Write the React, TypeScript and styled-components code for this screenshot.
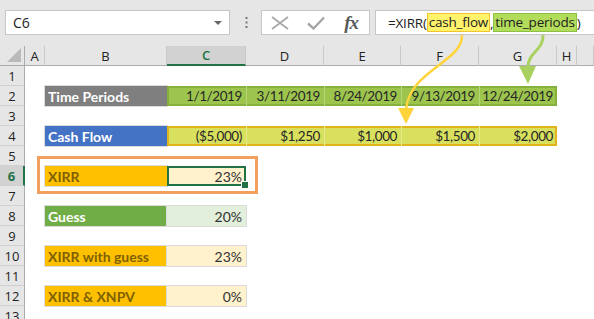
import styled, { createGlobalStyle } from "styled-components";

/**
 * Types
 */
type RangeTone = "green" | "yellow";

/**
 * Styled
 */
const GlobalStyle = createGlobalStyle`
  body {
    margin: 0;
    background: #fff;
  }
`;

const COLS = "25px 20px 122px 79px 78px 77px 78px 78px 20px 1fr";

const Page = styled.div`
  position: relative;
  width: 594px;
  height: 319px;
  overflow: hidden;
  background: #fff;
  font-family: "Open Sans", "Noto Sans", sans-serif;
`;

const FormulaBar = styled.div`
  display: flex;
  align-items: flex-start;
  box-sizing: border-box;
  height: 46px;
  padding: 10px 0 0 5px;
  background: #e6e6e6;
`;

const NameBox = styled.div`
  position: relative;
  box-sizing: border-box;
  display: flex;
  align-items: center;
  width: 225px;
  height: 25px;
  padding-left: 7px;
  background: #fff;
  border: 1px solid #c6c6c6;
  font-size: 14px;
  color: #222;
`;

const Caret = styled.span`
  position: absolute;
  right: 7px;
  top: 10px;
  border-left: 4px solid transparent;
  border-right: 4px solid transparent;
  border-top: 4px solid #666;
`;

const Dots = styled.div`
  display: flex;
  align-items: center;
  justify-content: center;
  width: 31px;
  height: 25px;
  padding-left: 2px;
  box-sizing: border-box;
`;

const ButtonBox = styled.div`
  display: flex;
  box-sizing: border-box;
  width: 109px;
  height: 25px;
  background: #fff;
  border: 1px solid #c6c6c6;
`;

const BarButton = styled.div`
  display: flex;
  align-items: center;
  justify-content: center;
  width: 36px;
  height: 23px;
`;

const Fx = styled.span`
  font-family: "Liberation Serif", serif;
  font-style: italic;
  font-weight: bold;
  font-size: 19px;
  color: #5a5a5a;
  letter-spacing: -1px;
`;

const FormulaBox = styled.div`
  display: flex;
  align-items: center;
  box-sizing: border-box;
  flex: 1;
  height: 25px;
  margin-left: 5px;
  padding-left: 12px;
  background: #fff;
  border: 1px solid #c6c6c6;
  border-right: none;
  font-size: 13.5px;
  letter-spacing: -0.2px;
  color: #222;
  white-space: nowrap;
`;

const RefToken = styled.span<{ $tone: RangeTone }>`
  padding: 0 1px;
  line-height: 17px;
  background: ${(p) => (p.$tone === "yellow" ? "#fff36b" : "#b3dc5a")};
  border: 1px solid ${(p) => (p.$tone === "yellow" ? "#f4c430" : "#8cc043")};
`;

const SheetRow = styled.div`
  display: grid;
  grid-template-columns: ${COLS};
  height: 20px;
`;

const Corner = styled.div`
  position: relative;
  background: #e6e6e6;
  border-right: 1px solid #ababab;
  border-bottom: 1px solid #ababab;

  &::after {
    content: "";
    position: absolute;
    right: 3px;
    bottom: 3px;
    width: 14px;
    height: 14px;
    background: #b9b9b9;
    clip-path: polygon(100% 0, 100% 100%, 0 100%);
  }
`;

const ColHead = styled.div<{ $active?: boolean }>`
  display: flex;
  align-items: center;
  justify-content: center;
  box-sizing: border-box;
  background: ${(p) => (p.$active ? "#d2d2d2" : "#e6e6e6")};
  border-right: 1px solid #c9c9c9;
  border-bottom: ${(p) => (p.$active ? "2px solid #217346" : "1px solid #ababab")};
  font-size: 13px;
  color: ${(p) => (p.$active ? "#217346" : "#222")};
  font-weight: ${(p) => (p.$active ? 600 : 400)};
`;

const RowHead = styled.div<{ $active?: boolean }>`
  display: flex;
  align-items: center;
  justify-content: center;
  box-sizing: border-box;
  background: ${(p) => (p.$active ? "#d2d2d2" : "#e6e6e6")};
  border-right: ${(p) => (p.$active ? "2px solid #217346" : "1px solid #ababab")};
  border-bottom: 1px solid #d0d0d0;
  font-size: 13px;
  color: ${(p) => (p.$active ? "#217346" : "#222")};
  font-weight: ${(p) => (p.$active ? 700 : 400)};
`;

const Label = styled.div<{ $bg: string; $color: string }>`
  grid-column: 3;
  display: flex;
  align-items: center;
  box-sizing: border-box;
  padding-left: 3px;
  background: ${(p) => p.$bg};
  box-shadow: 0 0 0 1px #dcdcdc;
  font-family: "Lato", sans-serif;
  font-weight: 700;
  font-size: 14px;
  color: ${(p) => p.$color};
  white-space: nowrap;
`;

const Value = styled.div<{ $bg: string; $selected?: boolean }>`
  position: relative;
  grid-column: 4;
  display: flex;
  align-items: center;
  justify-content: flex-end;
  box-sizing: border-box;
  padding-right: 4px;
  background: ${(p) => p.$bg};
  box-shadow: ${(p) => (p.$selected ? "inset 0 0 0 2px #217346" : "0 0 0 1px #dcdcdc")};
  font-family: "Lato", sans-serif;
  font-size: 14px;
  color: #333;
`;

const FillHandle = styled.span`
  position: absolute;
  right: -3px;
  bottom: -3px;
  width: 6px;
  height: 6px;
  background: #217346;
  border: 1px solid #fff;
`;

const Range = styled.div<{ $tone: RangeTone }>`
  grid-column: 4 / span 5;
  display: grid;
  grid-template-columns: 79px 78px 77px 78px 78px;
  box-sizing: border-box;
  background: ${(p) => (p.$tone === "yellow" ? "#d9e05d" : "#9dc54e")};
  box-shadow: inset 0 0 0 2px ${(p) => (p.$tone === "yellow" ? "#e2b41b" : "#86b03d")};
`;

const RangeCell = styled.div<{ $tone: RangeTone }>`
  display: flex;
  align-items: center;
  justify-content: flex-end;
  padding-right: 4px;
  border-left: 1px solid ${(p) => (p.$tone === "yellow" ? "#e6ea8f" : "#b6d67e")};
  font-family: "Lato", sans-serif;
  font-size: 13.5px;
  letter-spacing: -0.4px;
  color: #262626;
  white-space: nowrap;

  &:first-child {
    border-left: none;
  }
`;

const Callout = styled.div`
  position: absolute;
  left: 37px;
  top: 156px;
  width: 221px;
  height: 38px;
  box-sizing: border-box;
  border: 3px solid #f1a060;
  pointer-events: none;
`;

const Arrows = styled.svg`
  position: absolute;
  left: 0;
  top: 0;
  pointer-events: none;
`;

/**
 * Data
 */
const columns = ["A", "B", "C", "D", "E", "F", "G", "H", ""];
const dates = ["1/1/2019", "3/11/2019", "8/24/2019", "9/13/2019", "12/24/2019"];
const flows = ["($5,000)", "$1,250", "$1,000", "$1,500", "$2,000"];

const results = [
  { row: 6, label: "XIRR", bg: "#ffc000", color: "#7f6000", valueBg: "#fff2cc", value: "23%", selected: true },
  { row: 8, label: "Guess", bg: "#70ad47", color: "#fff", valueBg: "#e2efda", value: "20%" },
  { row: 10, label: "XIRR with guess", bg: "#ffc000", color: "#7f6000", valueBg: "#fff2cc", value: "23%" },
  { row: 12, label: "XIRR & XNPV", bg: "#ffc000", color: "#7f6000", valueBg: "#fff2cc", value: "0%" },
];

const renderRow = (row: number) => {
  const head = <RowHead $active={row === 6}>{row}</RowHead>;

  if (row === 2) {
    return (
      <SheetRow key={row}>
        {head}
        <Label $bg="#7f7f7f" $color="#fff">Time Periods</Label>
        <Range $tone="green">
          {dates.map((d) => (
            <RangeCell key={d} $tone="green">{d}</RangeCell>
          ))}
        </Range>
      </SheetRow>
    );
  }

  if (row === 4) {
    return (
      <SheetRow key={row}>
        {head}
        <Label $bg="#4472c4" $color="#fff">Cash Flow</Label>
        <Range $tone="yellow">
          {flows.map((f) => (
            <RangeCell key={f} $tone="yellow">{f}</RangeCell>
          ))}
        </Range>
      </SheetRow>
    );
  }

  const result = results.find((r) => r.row === row);
  return (
    <SheetRow key={row}>
      {head}
      {result && (
        <>
          <Label $bg={result.bg} $color={result.color}>{result.label}</Label>
          <Value $bg={result.valueBg} $selected={result.selected}>
            {result.value}
            {result.selected && <FillHandle />}
          </Value>
        </>
      )}
    </SheetRow>
  );
};

const App = () => {
  return (
    <Page>
      <GlobalStyle />
      <FormulaBar>
        <NameBox>
          C6
          <Caret />
        </NameBox>
        <Dots>
          <svg width="3" height="13" viewBox="0 0 3 13">
            <rect x="0.5" y="1" width="2" height="2" fill="#777" />
            <rect x="0.5" y="5.5" width="2" height="2" fill="#777" />
            <rect x="0.5" y="10" width="2" height="2" fill="#777" />
          </svg>
        </Dots>
        <ButtonBox>
          <BarButton>
            <svg width="18" height="14" viewBox="0 0 18 14">
              <path d="M1 1 L17 13 M17 1 L1 13" stroke="#a6a6a6" strokeWidth="1.6" fill="none" />
            </svg>
          </BarButton>
          <BarButton>
            <svg width="18" height="14" viewBox="0 0 18 14">
              <path d="M1 7.5 L6.5 12.5 L17 1.5" stroke="#a6a6a6" strokeWidth="2.4" fill="none" />
            </svg>
          </BarButton>
          <BarButton>
            <Fx>fx</Fx>
          </BarButton>
        </ButtonBox>
        <FormulaBox>
          =XIRR(<RefToken $tone="yellow">cash_flow</RefToken>,<RefToken $tone="green">time_periods</RefToken>)
        </FormulaBox>
      </FormulaBar>

      <SheetRow>
        <Corner />
        {columns.map((c, i) => (
          <ColHead key={i} $active={c === "C"}>{c}</ColHead>
        ))}
      </SheetRow>
      {Array.from({ length: 13 }, (_, i) => renderRow(i + 1))}

      <Callout />

      <Arrows width="594" height="319" viewBox="0 0 594 319">
        <path d="M462 35 C 463 62, 410 70, 406 109" stroke="#ffd43b" strokeWidth="2.5" fill="none" />
        <polygon points="398,108 414,108 406,124" fill="#ffd43b" />
        <path d="M543 35 C 544 50, 528 52, 528 67" stroke="#a9d15f" strokeWidth="3" fill="none" />
        <polygon points="519,66 536,66 528,84" fill="#a9d15f" />
      </Arrows>
    </Page>
  );
};

export default App;
